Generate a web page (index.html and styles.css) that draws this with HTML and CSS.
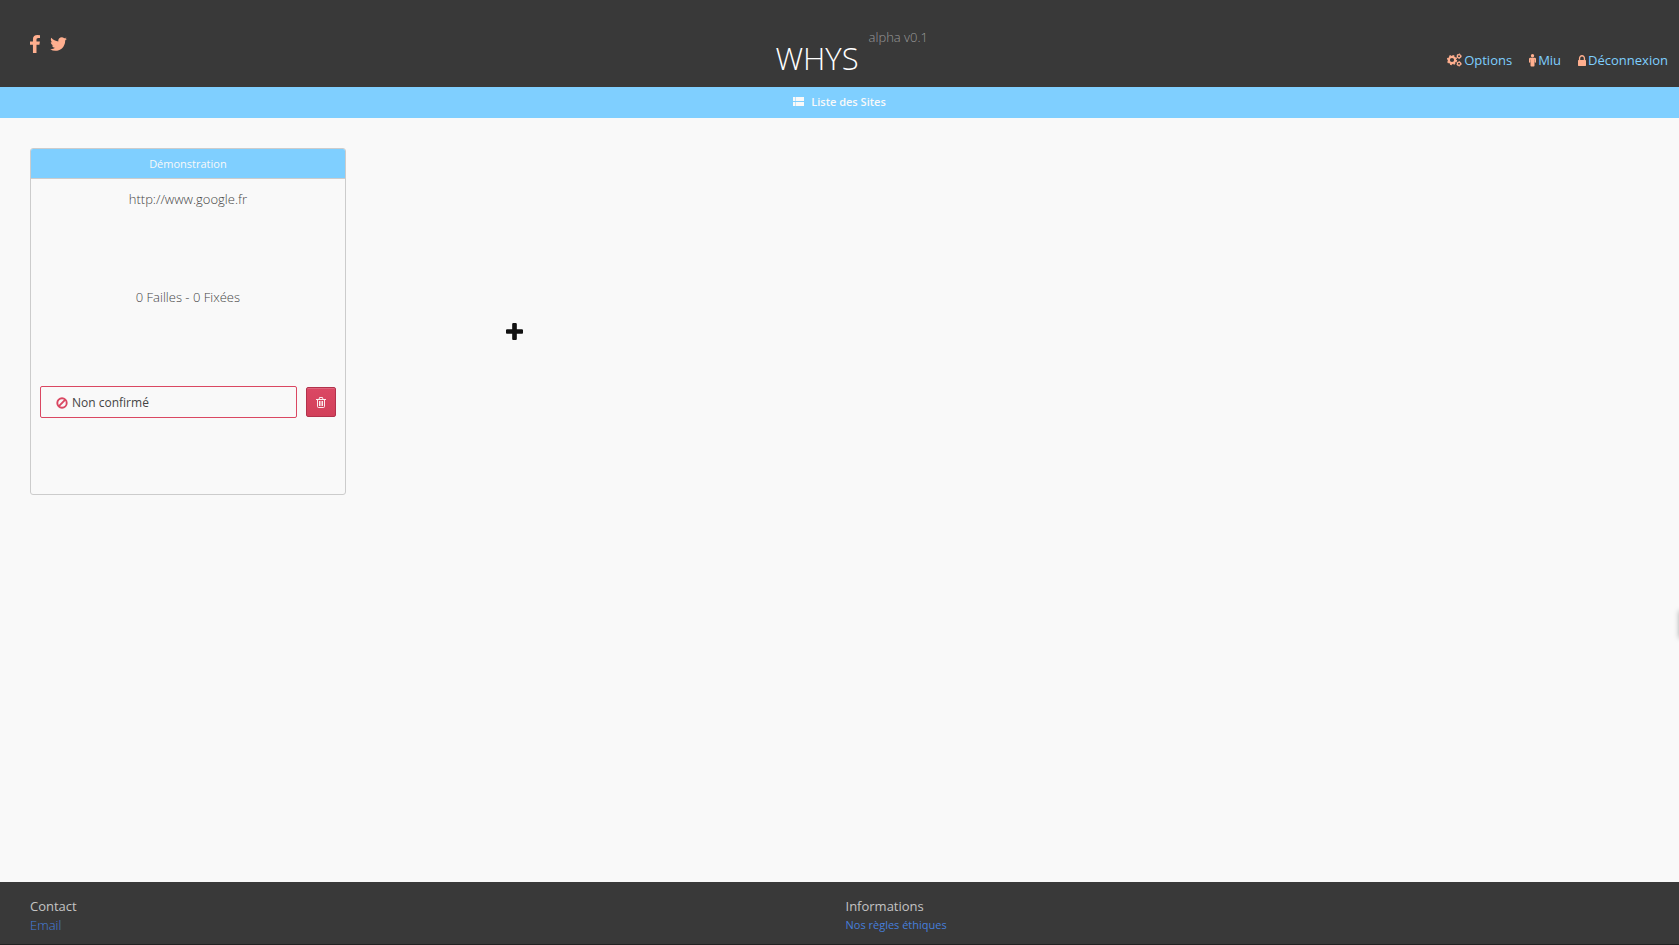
FILE: index.html
```
<!DOCTYPE html>
<html lang="fr">
<head>
<meta charset="utf-8">
<title>WHYS - Liste des Sites</title>
<link rel="stylesheet" href="styles.css">
</head>
<body>
<header class="header">
  <nav class="social">
    <a href="#" aria-label="Facebook"><svg width="10" height="18" viewBox="479 0 864 1664" preserveAspectRatio="none"><path d="M1343 12v264h-157q-86 0-116 36t-30 108v189h293l-39 296h-254v759h-306v-759h-255v-296h255v-218q0-186 104-288.500t277-102.500q147 0 228 12z"/></svg></a>
    <a href="#" aria-label="Twitter"><svg width="19" height="20" viewBox="0 0 1792 1792"><path d="M1684 408q-67 98-162 167 1 14 1 42 0 130-38 259.500t-115.500 248.500-184.500 210.500-258 146-323 54.500q-271 0-496-145 35 4 78 4 225 0 401-138-105-2-188-64.500t-114-159.500q33 5 61 5 43 0 85-11-112-23-185.500-111.500t-73.500-205.500v-4q68 38 146 41-66-44-105-115t-39-154q0-88 44-163 121 149 294.500 238.500t371.500 99.500q-8-38-8-74 0-134 94.500-228.500t228.500-94.500q140 0 236 102 109-21 205-78-37 115-142 178 93-10 186-50z"/></svg></a>
  </nav>
  <h1 class="brand">WHYS<span class="version">alpha v0.1</span></h1>
  <nav class="account">
    <a href="#"><svg width="15" height="14" viewBox="0 0 15 14"><g fill="none" stroke="currentColor"><circle cx="5" cy="7" r="3.200" stroke-width="2.200"/><circle cx="5" cy="7" r="4.500" stroke-width="1.300" stroke-dasharray="1.770 1.764"/><circle cx="12" cy="3.200" r="1.600" stroke-width="1.200"/><circle cx="12" cy="3.200" r="2.300" stroke-width=".8" stroke-dasharray="1.200 1.209"/><circle cx="12" cy="10.800" r="1.600" stroke-width="1.200"/><circle cx="12" cy="10.800" r="2.300" stroke-width=".8" stroke-dasharray="1.200 1.209"/></g></svg>Options</a>
    <a href="#"><svg width="7" height="13" viewBox="0 0 8 14" preserveAspectRatio="none"><circle cx="4" cy="2" r="1.900"/><path d="M1.500 4h5Q8 4 8 5.500V8.500q0 .8-.7.800T6.600 8.500V6h-.3v6.500q0 .9-.9.900H2.700q-1 0-1-.9V6h-.3v2.500q0 .8-.7.800T0 8.500v-3Q0 4 1.500 4z"/></svg>Miu</a>
    <a href="#"><svg width="8" height="11" viewBox="320 128 1152 1408" preserveAspectRatio="none"><path d="M640 768h512v-192q0-106-75-181t-181-75-181 75-75 181v192zm832 96v576q0 40-28 68t-68 28h-960q-40 0-68-28t-28-68v-576q0-40 28-68t68-28h32v-192q0-184 132-316t316-132 316 132 132 316v192h32q40 0 68 28t28 68z"/></svg>Déconnexion</a>
  </nav>
</header>
<nav class="menu">
  <a href="#"><svg width="11" height="9" viewBox="0 0 11 9" shape-rendering="crispEdges"><path d="M0 0h2v4H0zM3 0h8v4H3zM0 5h2v4H0zM3 5h8v4H3z"/><path d="M2 0h1v4H2zM2 5h1v4H2z" opacity=".5"/></svg>Liste des Sites</a>
</nav>
<main class="sites">
  <article class="card">
    <h2 class="card-title">Démonstration</h2>
    <p class="url">http://www.google.fr</p>
    <p class="stats">0 Failles - 0 Fixées</p>
    <div class="actions">
      <div class="status"><svg width="12" height="12" viewBox="0 0 12 12" fill="none" stroke="currentColor" stroke-width="1.900"><circle cx="6" cy="6" r="4.700"/><path d="M2.700 9.300l6.600-6.600"/></svg><span>Non confirmé</span></div>
      <button class="delete" type="button" aria-label="Supprimer"><svg width="10" height="11" viewBox="0 0 10 11" fill="none" stroke="currentColor"><path d="M0 2.500h10M3 2.500l.5-2h3l.5 2M1.500 2.500v7q0 1 1 1h5q1 0 1-1v-7M3.500 4v5M5 4v5M6.500 4v5" stroke-width=".9"/></svg></button>
    </div>
  </article>
  <button class="add" type="button" aria-label="Ajouter un site"><svg width="17" height="17" viewBox="192 128 1408 1408"><path d="M1600 736v192q0 40-28 68t-68 28h-416v416q0 40-28 68t-68 28h-192q-40 0-68-28t-28-68v-416h-416q-40 0-68-28t-28-68v-192q0-40 28-68t68-28h416v-416q0-40 28-68t68-28h192q40 0 68 28t28 68v416h416q40 0 68 28t28 68z"/></svg></button>
</main>
<footer class="footer">
  <section>
    <h3>Contact</h3>
    <a class="email" href="#">Email</a>
  </section>
  <section>
    <h3>Informations</h3>
    <a class="rules" href="#">Nos règles éthiques</a>
  </section>
</footer>
<div class="drawer"></div>
</body>
</html>
```
FILE: styles.css
```
* { box-sizing: border-box; }
body {
  margin: 0;
  min-height: 100vh;
  display: flex;
  flex-direction: column;
  overflow: hidden;
  background: #f9f9f9;
  color: #444;
  font-family: "Open Sans", sans-serif;
  font-size: 13px;
  line-height: 20px;
}
h1, h2, h3, p { margin: 0; font-weight: 400; }
a { text-decoration: none; }
svg { fill: currentColor; flex: none; }
svg[fill="none"] { fill: none; }

.header {
  display: grid;
  grid-template-columns: 1fr auto 1fr;
  height: 87px;
  background: #393939;
}
.social {
  display: flex;
  align-items: center;
  gap: 9px;
  padding: 1px 0 0 30px;
}
.social a { display: flex; color: #ffaf8f; }
.brand {
  position: relative;
  padding-top: 38px;
  margin-right: 45px;
  color: #fff;
  font-size: 31px;
  font-weight: 300;
  line-height: 40px;
}
.version {
  position: absolute;
  top: 27px;
  left: 100%;
  margin-left: 10px;
  color: #999;
  font-size: 13px;
  line-height: 20px;
  white-space: nowrap;
}
.account {
  display: flex;
  justify-content: flex-end;
  gap: 17px;
  padding: 50px 11px 0 0;
}
.account a { display: flex; align-items: center; height: 20px; gap: 2px; color: #7fcfff; }
.account svg { color: #ffaf8f; }

.menu {
  display: flex;
  justify-content: center;
  height: 31px;
  background: #7fcfff;
}
.menu a {
  display: flex;
  align-items: center;
  gap: 7px;
  padding-bottom: 2px;
  color: #f9f9f9;
  font-size: 11px;
  font-weight: 600;
}

.sites {
  flex: 1;
  display: grid;
  grid-template-columns: repeat(5, 1fr);
  align-items: start;
  gap: 10px;
  padding: 30px;
}
.card {
  height: 347px;
  border: 1px solid #ccc;
  border-radius: 3px;
  text-align: center;
}
.card-title {
  height: 30px;
  border-bottom: 1px solid #ccc;
  border-radius: 2px 2px 0 0;
  background: #7fcfff;
  color: #f9f9f9;
  font-size: 11px;
  line-height: 30px;
}
.url, .stats { font-weight: 300; }
.url { margin-top: 10px; }
.stats { margin-top: 78px; }
.actions {
  display: flex;
  align-items: center;
  gap: 9px;
  margin-top: 79px;
  padding: 0 9px;
}
.status {
  flex: 1;
  display: flex;
  align-items: center;
  gap: 4px;
  height: 32px;
  padding: 1px 15px 0;
  border: 1px solid #da4762;
  border-radius: 2px;
  font-size: 12px;
}
.status svg { color: #da4762; }
.delete {
  display: flex;
  align-items: center;
  justify-content: center;
  width: 30px;
  height: 30px;
  padding: 0;
  border: 1px solid #b2324c;
  border-radius: 2px;
  background: linear-gradient(#db4864, #d2405a);
  box-shadow: inset 0 1px 0 #e0667d;
  color: #fff;
}
.add {
  display: flex;
  align-items: center;
  justify-content: center;
  height: 347px;
  padding: 20px 0 0 2px;
  border: 0;
  background: none;
  color: #111;
}

.footer {
  display: grid;
  grid-template-columns: 1fr 1fr;
  height: 63px;
  padding: 15px 18px 0 30px;
  border-bottom: 1px solid #222;
  background: #393939;
}
.footer h3 { color: #c4c4c4; font-size: 13px; line-height: 19px; }
.footer a { display: block; color: #467fdb; line-height: 18px; }
.footer .email { font-weight: 300; }
.footer .rules { font-size: 11px; }

.drawer {
  position: fixed;
  top: 611px;
  left: 100%;
  width: 30px;
  height: 27px;
  box-shadow: 0 0 5px #aaa;
}
```
